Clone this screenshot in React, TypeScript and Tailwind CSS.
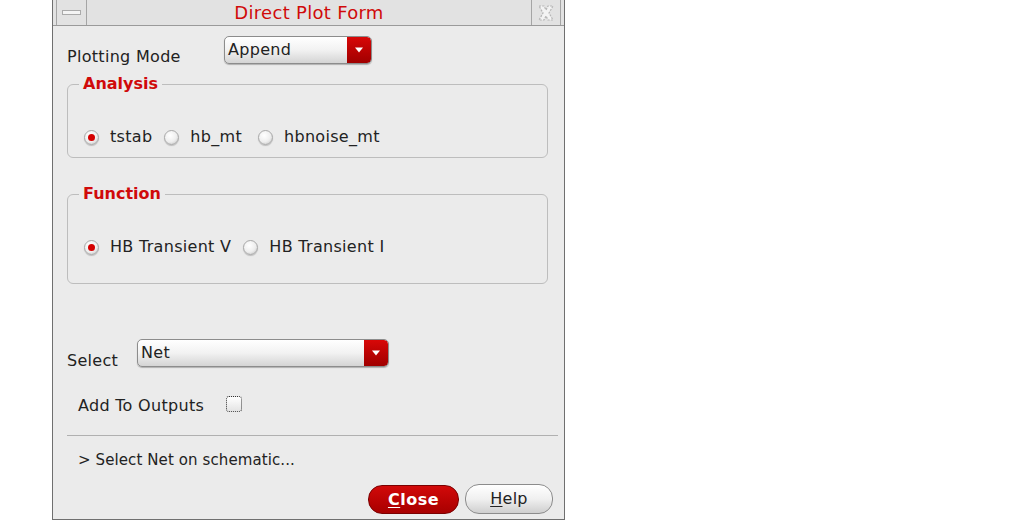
import React from 'react';

const FONT = { fontFamily: '"DejaVu Sans", "Liberation Sans", sans-serif' };

function DropArrow() {
  return (
    <div className="w-[24px] h-full flex items-center justify-center bg-gradient-to-b from-[#d80808] to-[#a00000] rounded-r-[4px]">
      <svg width="10" height="6" viewBox="0 0 10 6">
        <path d="M1 0.5 L9 0.5 L5 5.5 Z" fill="#ffffff" />
      </svg>
    </div>
  );
}

function Combo({ value, width }: { value: string; width: string }) {
  return (
    <div className={`${width} h-[28px] flex items-stretch border border-[#8c8c8c] rounded-[5px] bg-gradient-to-b from-[#ffffff] via-[#f2f2f2] to-[#d4d4d4] shadow-[0_1px_1px_rgba(0,0,0,0.25)] overflow-hidden`}>
      <span className="flex-1 pl-[3px] pt-[4px] text-[16px] leading-[18px] tracking-[0.3px] text-[#222]">{value}</span>
      <DropArrow />
    </div>
  );
}

function Radio({ checked, label, gapAfter = 'mr-[12px]' }: { checked?: boolean; label: string; gapAfter?: string }) {
  return (
    <div className="flex items-center gap-[11px]">
      <div className="w-[15px] h-[15px] rounded-full border border-[#a8a8a8] bg-[radial-gradient(circle_at_40%_35%,#ffffff_0%,#eeeeee_55%,#bcbcbc_100%)] flex items-center justify-center shadow-[0_1px_1px_rgba(0,0,0,0.2)]">
        {checked && <div className="w-[7px] h-[7px] rounded-full bg-[#d40000]" />}
      </div>
      <span className={`text-[16px] tracking-[0.3px] text-[#222] ${gapAfter}`}>{label}</span>
    </div>
  );
}

function Group({ title, height, children }: { title: string; height: string; children: React.ReactNode }) {
  return (
    <fieldset className={`${height} border border-[#bdbdbd] rounded-[6px] mx-0 px-[15px]`}>
      <legend className="-ml-[4px] px-[4px] text-[16px] font-bold text-[#d00a0a] leading-[18px]">{title}</legend>
      {children}
    </fieldset>
  );
}

export default function App() {
  return (
    <div className="w-[1013px] h-[528px] bg-white" style={FONT}>
      <div className="ml-[52px] w-[513px] h-[520px] border-x border-b border-[#6f6f6f] bg-[#ebebeb] flex flex-col">
        {/* Title bar */}
        <div className="h-[26px] flex items-stretch bg-[#e2e2e2] border-b border-[#9a9a9a] pl-[3px] pr-[3px]">
          <div className="w-[31px] flex items-center justify-center border-x border-[#a5a5a5]">
            <div className="w-[19px] h-[5px] border border-[#aaaaaa] bg-[#f4f4f4]" />
          </div>
          <div className="flex-1 flex items-center justify-center text-[18px] tracking-[0.3px] text-[#d00a0a]">Direct Plot Form</div>
          <div className="w-[30px] flex items-center justify-center border-x border-[#a5a5a5]">
            <svg width="20" height="20" viewBox="0 0 20 20">
              <path d="M3 3 L8 3 L10 7 L12 3 L17 3 L13 10 L17 17 L12 17 L10 13 L8 17 L3 17 L7 10 Z" fill="#f3f3f3" stroke="#b5b5b5" strokeWidth="1.2" strokeDasharray="2 1.2" />
            </svg>
          </div>
        </div>

        <div className="flex flex-col pl-[14px] pr-[15px]">
          {/* Plotting mode */}
          <div className="mt-[10px] h-[28px] flex items-end">
            <span className="w-[157px] text-[16px] tracking-[0.3px] text-[#222] leading-[18px] -mb-[2px]">Plotting Mode</span>
            <Combo value="Append" width="w-[148px]" />
          </div>

          {/* Analysis */}
          <div className="mt-[11px] pr-[1px]">
            <Group title="Analysis" height="h-[83px]">
              <div className="flex items-center mt-[32px] pl-[1px]">
                <Radio checked label="tstab" />
                <Radio label="hb_mt" gapAfter="mr-[16px]" />
                <Radio label="hbnoise_mt" />
              </div>
            </Group>
          </div>

          {/* Function */}
          <div className="mt-[27px] pr-[1px]">
            <Group title="Function" height="h-[99px]">
              <div className="flex items-center mt-[32px] pl-[1px]">
                <Radio checked label="HB Transient V" />
                <Radio label="HB Transient I" />
              </div>
            </Group>
          </div>

          {/* Select */}
          <div className="mt-[54px] h-[29px] flex items-end">
            <span className="w-[70px] text-[16px] tracking-[0.3px] text-[#222] leading-[18px] -mb-[3px]">Select</span>
            <Combo value="Net" width="w-[252px]" />
          </div>

          {/* Add to outputs */}
          <div className="mt-[29px] h-[20px] flex items-center pl-[11px]">
            <span className="w-[148px] text-[16px] tracking-[0.3px] text-[#222]">Add To Outputs</span>
            <div className="w-[16px] h-[16px] -mt-[5px] border border-dotted border-[#333] rounded-[3px] bg-gradient-to-b from-[#ffffff] to-[#e4e4e4]" />
          </div>

          <div className="mt-[19px] h-0 border-t border-[#b0b0b0] mr-[-9px]" />

          <div className="mt-[14px] pl-[11px] text-[15px] tracking-[0.1px] leading-[20px] text-[#222]">&gt; Select Net on schematic...</div>

          {/* Buttons */}
          <div className="mt-[15px] flex justify-end gap-[6px] mr-[-4px]">
            <button className="w-[91px] h-[29px] rounded-[14px] border border-[#7a0000] bg-gradient-to-b from-[#d20a0a] to-[#a80000] text-white text-[16px] font-bold tracking-[0.5px]">
              <span className="underline underline-offset-2">C</span>lose
            </button>
            <button className="w-[88px] h-[30px] -mt-[1px] rounded-[14px] border border-[#8c8c8c] bg-gradient-to-b from-[#ffffff] via-[#f0f0f0] to-[#cfcfcf] text-[#222] text-[16px] tracking-[0.3px]">
              <span className="underline underline-offset-2">H</span>elp
            </button>
          </div>
        </div>
      </div>
    </div>
  );
}
